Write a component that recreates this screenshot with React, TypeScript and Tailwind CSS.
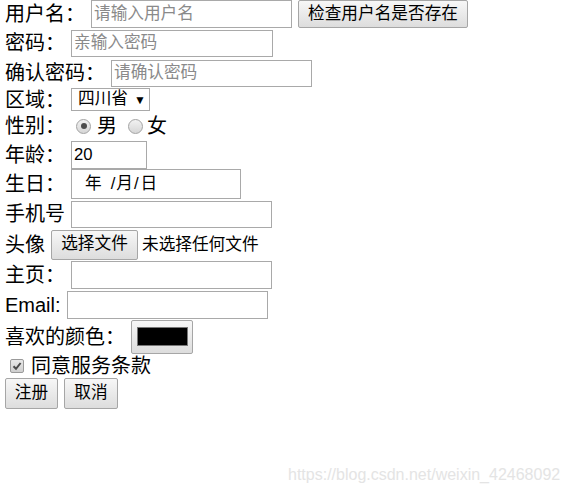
import React from "react";

const font = { fontFamily: '"Liberation Sans", "Noto Sans CJK SC", sans-serif' };

const inputCls =
  "border border-[#a9a9a9] bg-white px-[2px] text-[16.67px] text-black outline-none placeholder:text-[#8a8a8a] box-border";
const btnCls =
  "border border-[#a6a6a6] rounded-[2px] bg-gradient-to-b from-[#f7f7f7] to-[#dddddd] text-[16.67px] text-black flex items-center justify-center box-border leading-none";

function Radio({ checked }: { checked?: boolean }) {
  return (
    <span className="w-[15px] h-[15px] rounded-full border border-[#a3a3a3] bg-gradient-to-b from-[#f2f2f2] to-[#d6d6d6] flex items-center justify-center box-border">
      {checked && <span className="w-[6px] h-[6px] rounded-full bg-[#4d4d4d]" />}
    </span>
  );
}

export default function App() {
  return (
    <div className="relative w-[568px] h-[492px] bg-white text-black overflow-hidden" style={font}>
      <div className="flex flex-col pl-[5px] text-[20px]">
        {/* R1 */}
        <div className="flex items-center h-[28px]">
          <span className="w-[86px] shrink-0">用户名：</span>
          <input className={`${inputCls} w-[201px] h-[28px]`} placeholder="请输入用户名" />
          <button className={`${btnCls} ml-[6px] w-[170px] h-[28px]`}>检查用户名是否存在</button>
        </div>
        {/* R2 */}
        <div className="flex items-center h-[30px]">
          <span className="w-[66px] shrink-0">密码：</span>
          <input className={`${inputCls} w-[202px] h-[27px]`} placeholder="亲输入密码" />
        </div>
        {/* R3 */}
        <div className="flex items-center h-[30px]">
          <span className="w-[106px] shrink-0">确认密码：</span>
          <input className={`${inputCls} w-[201px] h-[27px]`} placeholder="请确认密码" />
        </div>
        {/* R4 */}
        <div className="flex items-center h-[23px]">
          <span className="w-[66px] shrink-0">区域：</span>
          <div className="w-[79px] h-[23px] border border-[#a9a9a9] bg-white box-border flex items-center pl-[6px] text-[16.67px] leading-none">
            <span>四川省</span>
            <span className="ml-[6px] text-[12px]">▼</span>
          </div>
        </div>
        {/* R5 */}
        <div className="flex items-center h-[30px]">
          <span className="w-[71px] shrink-0">性别：</span>
          <Radio checked />
          <span className="ml-[6px]">男</span>
          <span className="ml-[11px]"><Radio /></span>
          <span className="ml-[4px]">女</span>
        </div>
        {/* R6 */}
        <div className="flex items-center h-[28px]">
          <span className="w-[66px] shrink-0">年龄：</span>
          <input className={`${inputCls} w-[76px] h-[28px]`} defaultValue="20" />
        </div>
        {/* R7 */}
        <div className="flex items-center h-[30px]">
          <span className="w-[66px] shrink-0">生日：</span>
          <div className="w-[170px] h-[30px] border border-[#a9a9a9] bg-white box-border flex items-center pl-[13px] text-[16.67px] leading-none">
            <span>年</span>
            <span className="ml-[9px]">/</span>
            <span className="ml-[1px]">月</span>
            <span className="ml-[1px]">/</span>
            <span className="ml-[2px]">日</span>
          </div>
        </div>
        {/* R8 */}
        <div className="flex items-center h-[30px]">
          <span className="w-[66px] shrink-0">手机号</span>
          <input className={`${inputCls} w-[201px] h-[27px]`} />
        </div>
        {/* R9 */}
        <div className="flex items-center h-[31px]">
          <span className="w-[46px] shrink-0">头像</span>
          <button className={`${btnCls} w-[87px] h-[30px]`}>选择文件</button>
          <span className="ml-[4px] text-[16.67px]">未选择任何文件</span>
        </div>
        {/* R10 */}
        <div className="flex items-center h-[30px]">
          <span className="w-[66px] shrink-0">主页：</span>
          <input className={`${inputCls} w-[201px] h-[28px]`} />
        </div>
        {/* R11 */}
        <div className="flex items-center h-[29px]">
          <span className="w-[62px] shrink-0">Email:</span>
          <input className={`${inputCls} w-[201px] h-[28px]`} />
        </div>
        {/* R12 */}
        <div className="flex items-center h-[35px]">
          <span className="w-[126px] shrink-0">喜欢的颜色：</span>
          <div className={`${btnCls} w-[62px] h-[34px]`}>
            <span className="w-[51px] h-[19px] bg-black border border-[#777]" />
          </div>
        </div>
        {/* R13 */}
        <div className="flex items-center h-[23px]">
          <span className="ml-[5px] w-[14px] h-[14px] rounded-[2px] border border-[#9a9a9a] bg-gradient-to-b from-[#e8e8e8] to-[#cfcfcf] flex items-center justify-center box-border">
            <svg width="10" height="10" viewBox="0 0 10 10">
              <path d="M1.5 5.2 L4 7.8 L8.6 2" stroke="#4a4a4a" strokeWidth="2" fill="none" />
            </svg>
          </span>
          <span className="ml-[7px]">同意服务条款</span>
        </div>
        {/* R14 */}
        <div className="flex items-center mt-[1px] h-[31px]">
          <button className={`${btnCls} w-[53px] h-[31px]`}>注册</button>
          <button className={`${btnCls} ml-[6px] w-[54px] h-[31px]`}>取消</button>
        </div>
      </div>
      <div
        className="absolute left-[288px] top-[463px] text-[16px] text-[#e4e4e4] whitespace-nowrap"
        style={{ fontFamily: '"Liberation Sans", Arial, sans-serif' }}
      >
        https://blog.csdn.net/weixin_42468092
      </div>
    </div>
  );
}
